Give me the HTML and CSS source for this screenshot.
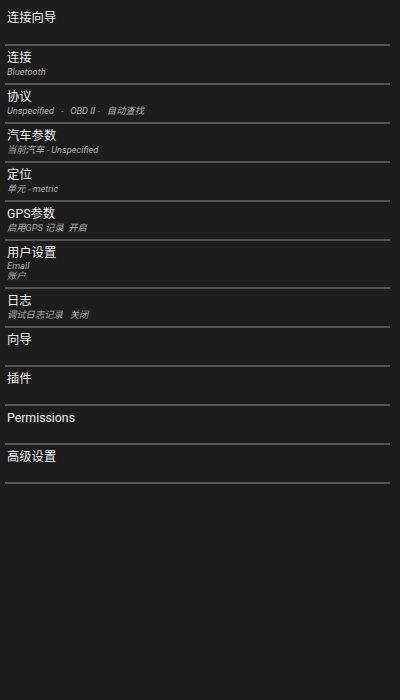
FILE: index.html
```html
<!DOCTYPE html>
<html>
<head>
<meta charset="utf-8">
<link rel="stylesheet" href="styles.css">
</head>
<body>
<div class="list">
  <div class="head"><div class="title">连接向导</div></div>
  <div class="row"><div class="title">连接</div><div class="sub">Bluetooth</div></div>
  <div class="row"><div class="title">协议</div><div class="sub">Unspecified   -   OBD II -   自动查找</div></div>
  <div class="row"><div class="title">汽车参数</div><div class="sub">当前汽车 - Unspecified</div></div>
  <div class="row"><div class="title">定位</div><div class="sub">单元 - metric</div></div>
  <div class="row"><div class="title">GPS参数</div><div class="sub">启用GPS 记录  开启</div></div>
  <div class="row"><div class="title">用户设置</div><div class="sub">Email</div><div class="sub">账户</div></div>
  <div class="row"><div class="title">日志</div><div class="sub">调试日志记录   关闭</div></div>
  <div class="row"><div class="title">向导</div><div class="sub"></div></div>
  <div class="row"><div class="title">插件</div><div class="sub"></div></div>
  <div class="row"><div class="title">Permissions</div><div class="sub"></div></div>
  <div class="row"><div class="title">高级设置</div><div class="sub"></div></div>
</div>
</body>
</html>
```
FILE: styles.css
```css
html, body {
  margin: 0;
  padding: 0;
  background: #1d1d1d;
  height: 100%;
}
body {
  font-family: Roboto, "Noto Sans CJK SC", sans-serif;
  color: #ececec;
}
.list {
  display: flex;
  flex-direction: column;
  width: 400px;
}
.head, .row {
  margin: 0 10px 0 5px;
  padding: 0 2px;
  border-bottom: 2px solid #555;
}
.head {
  height: 46px;
  box-sizing: border-box;
  padding-top: 10px;
}
.row {
  padding-top: 4px;
  padding-bottom: 6px;
}
.title {
  font-size: 12.3px;
  line-height: 16px;
  color: #ededed;
}
.sub {
  font-size: 9.3px;
  line-height: 11px;
  height: 11px;
  font-style: italic;
  color: #b0b0b0;
  white-space: pre;
}
.sub + .sub {
  line-height: 10px;
  height: 10px;
}
.row .sub:nth-child(2):not(:last-child) {
  line-height: 10px;
  height: 10px;
}
```
